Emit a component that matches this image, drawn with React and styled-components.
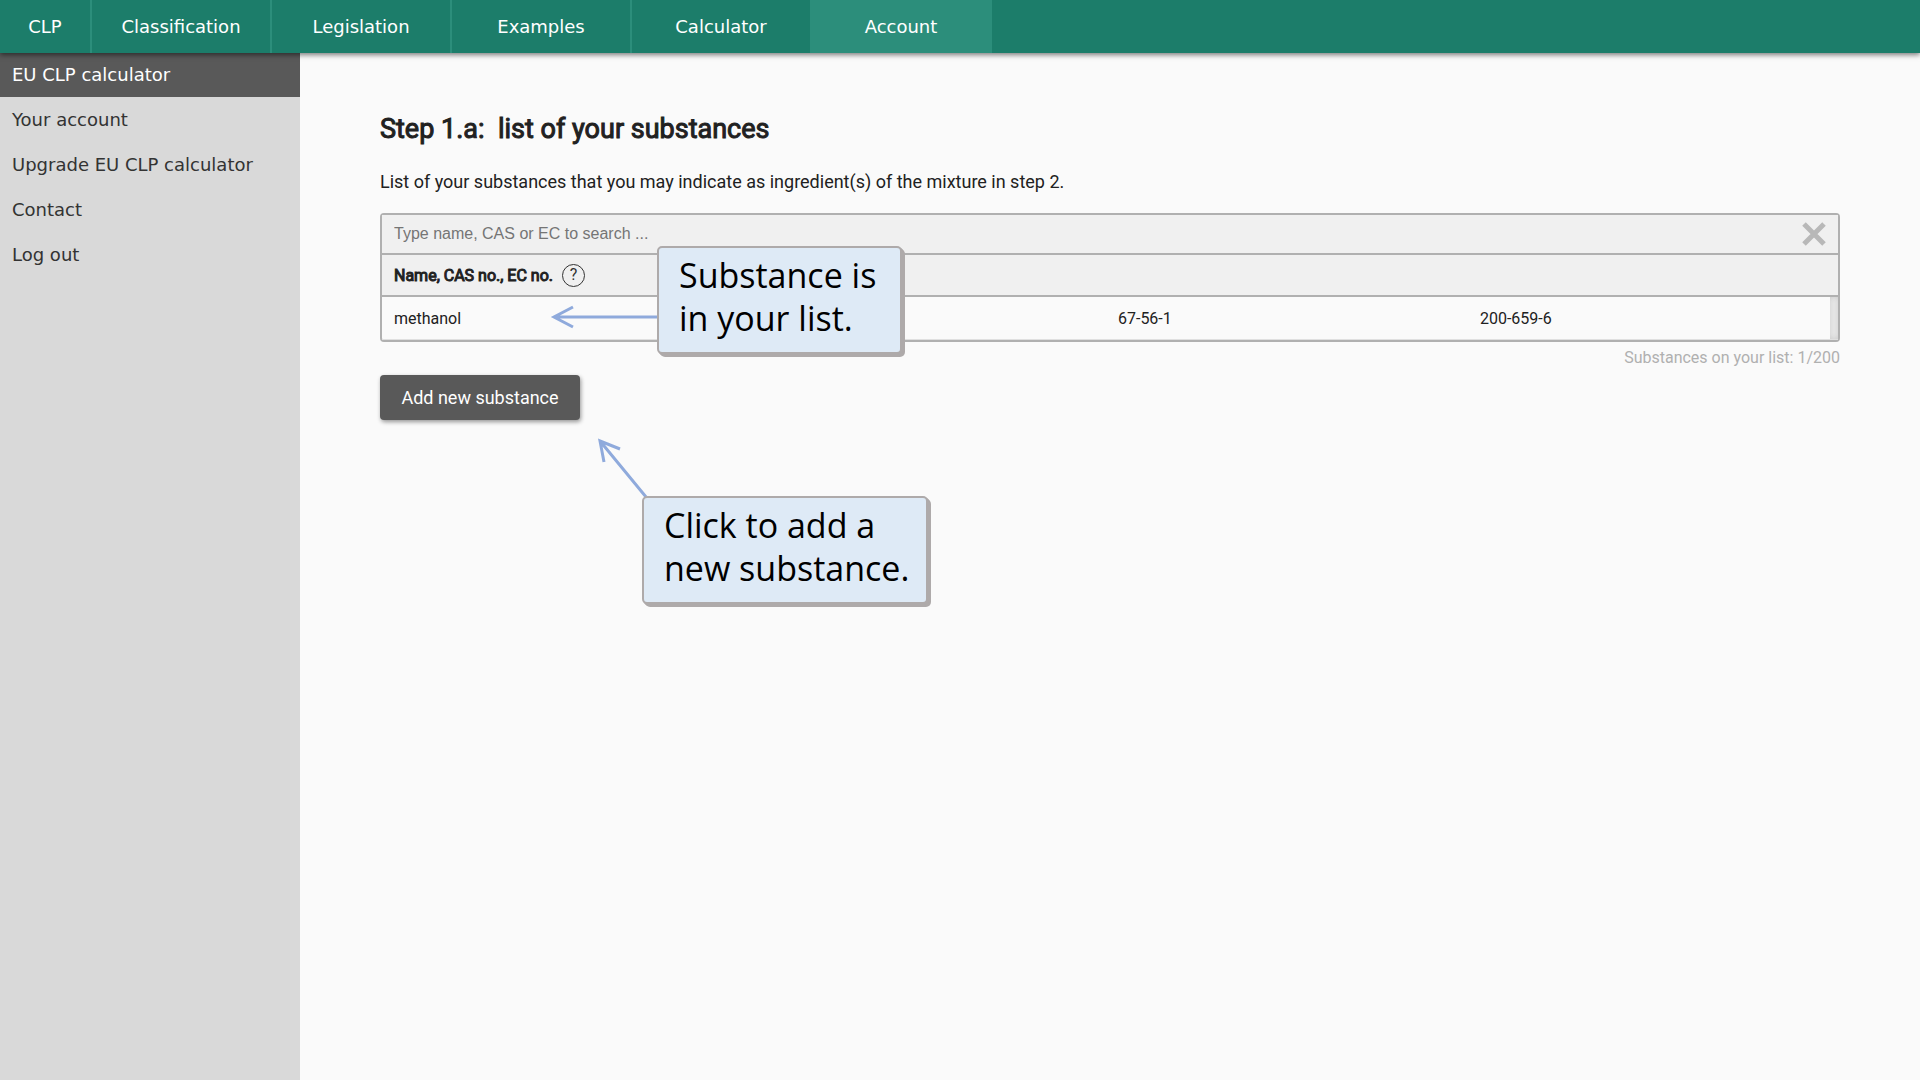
import React, { useState } from 'react';
import styled, { createGlobalStyle, ThemeProvider } from 'styled-components';

const theme = {
    color: {
        primary: '#1c7d6a',
        primaryLight: '#2c8e7b',
        dark: '#595959',
        sidebar: '#d9d9d9',
        background: '#fafafa',
        field: '#f0f0f0',
        line: '#b0b0b0',
        text: '#212121',
        note: '#deeaf6',
        noteLine: '#aeaaaa',
        arrow: '#8faadc',
    },
    font: {
        menu: '"DejaVu Sans", Verdana, sans-serif',
        body: 'Roboto, sans-serif',
        input: '"Liberation Sans", Arial, sans-serif',
        note: '"Open Sans", "Trebuchet MS", sans-serif',
    },
};

const TABS = ['CLP', 'Classification', 'Legislation', 'Examples', 'Calculator', 'Account'];
const MENU = ['EU CLP calculator', 'Your account', 'Upgrade EU CLP calculator', 'Contact', 'Log out'];
const SUBSTANCES = [
    { name: 'methanol', cas: '67-56-1', ec: '200-659-6' },
];
const MAX_SUBSTANCES = 200;

function SearchBar({ value, onChange }) {
    return (
        <StyledSearchBar>
            <input
                type="text"
                aria-label="Search substances"
                placeholder="Type name, CAS or EC to search ..."
                value={value}
                onChange={(e) => onChange(e.target.value)}
            />
            <button type="button" aria-label="Clear search" onClick={() => onChange('')}>
                <svg width="24" height="24" viewBox="0 0 24 24" fill="none" stroke="currentColor" strokeWidth="5">
                    <path d="M2 2L22 22M22 2L2 22" />
                </svg>
            </button>
        </StyledSearchBar>
    );
}

function SubstanceTable({ items }) {
    return (
        <StyledTable>
            <colgroup>
                <col />
                <col />
                <col />
                <col />
                <TrackCol />
            </colgroup>
            <thead>
                <tr>
                    <th colSpan={5} scope="colgroup">
                        <HeadLabel>
                            <span>Name, CAS no., EC no.</span>
                            <HelpButton type="button" aria-label="Help">?</HelpButton>
                        </HeadLabel>
                    </th>
                </tr>
            </thead>
            <tbody>
                {items.map(item => (
                    <tr key={item.cas}>
                        <td colSpan={2}>{item.name}</td>
                        <td>{item.cas}</td>
                        <td>{item.ec}</td>
                        <TrackCell />
                    </tr>
                ))}
            </tbody>
        </StyledTable>
    );
}

function App() {
    const [query, setQuery] = useState('');
    const items = SUBSTANCES.filter(x => Object.values(x).join(' ').includes(query.toLowerCase()));
    return (
        <ThemeProvider theme={theme}>
            <GlobalStyle />
            <Page>
                <TopNav>
                    {TABS.map((tab, i) => (
                        <Tab key={tab} href="#" $small={i === 0} $active={tab === 'Account'}>{tab}</Tab>
                    ))}
                </TopNav>
                <Body>
                    <Sidebar>
                        {MENU.map((item, i) => (
                            <SidebarLink key={item} href="#" $active={i === 0}>{item}</SidebarLink>
                        ))}
                    </Sidebar>
                    <Main>
                        <Title>Step 1.a:&nbsp; list of your substances</Title>
                        <Intro>List of your substances that you may indicate as ingredient(s) of the mixture in step 2.</Intro>
                        <Anchor>
                            <ListBox>
                                <SearchBar value={query} onChange={setQuery} />
                                <SubstanceTable items={items} />
                            </ListBox>
                            <ListArrow width="108" height="26" viewBox="0 0 108 26">
                                <path d="M108 13H4M23 3L4 13L23 23" />
                            </ListArrow>
                            <ListNote>Substance is<br />in your list.</ListNote>
                        </Anchor>
                        <Counter>Substances on your list: {SUBSTANCES.length}/{MAX_SUBSTANCES}</Counter>
                        <Anchor>
                            <AddButton type="button">Add new substance</AddButton>
                            <AddArrow width="52" height="62" viewBox="0 0 52 62">
                                <path d="M50 62L4 6M24 14L4 6L8 27" />
                            </AddArrow>
                            <AddNote>Click to add a<br />new substance.</AddNote>
                        </Anchor>
                    </Main>
                </Body>
            </Page>
        </ThemeProvider>
    );
}

export default App;

const GlobalStyle = createGlobalStyle`
    *{
        box-sizing:border-box;
    }
    body{
        margin:0;
        background-color:${props => props.theme.color.background};
        color:${props => props.theme.color.text};
        font-family:${props => props.theme.font.body};
    }
`;

const Page = styled.div`
    display:flex;
    flex-direction:column;
    min-height:100vh;
`;

const TopNav = styled.nav`
    position:relative;
    z-index:1;
    display:flex;
    height:53px;
    margin-bottom:-1px;
    background-color:${props => props.theme.color.primary};
    box-shadow:0 2px 5px rgba(0,0,0,.5);
`;

const Tab = styled.a`
    display:flex;
    align-items:center;
    justify-content:center;
    width:${props => props.$small ? '92px' : '180px'};
    border-right:2px solid ${props => props.theme.color.primaryLight};
    background-color:${props => props.$active ? props.theme.color.primaryLight : 'transparent'};
    color:#fff;
    font-family:${props => props.theme.font.menu};
    font-size:18px;
    text-decoration:none;
`;

const Body = styled.div`
    flex:1;
    display:flex;
`;

const Sidebar = styled.nav`
    flex:none;
    width:300px;
    background-color:${props => props.theme.color.sidebar};
`;

const SidebarLink = styled.a`
    display:block;
    padding:0 12px;
    line-height:45px;
    background-color:${props => props.$active ? props.theme.color.dark : 'transparent'};
    color:${props => props.$active ? '#fff' : '#333'};
    font-family:${props => props.theme.font.menu};
    font-size:18px;
    text-decoration:none;
`;

const Main = styled.main`
    flex:1;
    min-width:0;
    padding:60px 80px;
`;

const Title = styled.h1`
    margin:0 0 22px;
    font-size:27px;
    font-weight:400;
    line-height:34px;
    -webkit-text-stroke:1px;
`;

const Intro = styled.p`
    margin:0 0 17px;
    font-size:18px;
    line-height:28px;
`;

const Anchor = styled.div`
    position:relative;
`;

const ListBox = styled.div`
    border:2px solid ${props => props.theme.color.line};
    border-radius:4px;
`;

const StyledSearchBar = styled.div`
    display:flex;
    align-items:center;
    height:38px;
    padding:0 12px;
    background-color:${props => props.theme.color.field};
    input{
        flex:1;
        padding:0;
        border:0;
        outline:0;
        background-color:transparent;
        font-family:${props => props.theme.font.input};
        font-size:16px;
    }
    input::placeholder{
        color:#757575;
    }
    button{
        display:flex;
        padding:0;
        border:0;
        background-color:transparent;
        color:#b8b8b8;
        cursor:pointer;
    }
`;

const StyledTable = styled.table`
    width:100%;
    table-layout:fixed;
    border-collapse:separate;
    border-spacing:0;
    font-size:16px;
    th, td{
        padding:0 12px;
        text-align:left;
    }
    th{
        height:44px;
        border-top:2px solid ${props => props.theme.color.line};
        border-bottom:2px solid ${props => props.theme.color.line};
        background-color:${props => props.theme.color.field};
        font-weight:400;
    }
    td{
        height:43px;
        border-bottom:1px solid #e0e0e0;
    }
`;

const TrackCol = styled.col`
    width:8px;
`;

const TrackCell = styled.td`
    && {
        padding:0;
        background-color:#ececec;
        box-shadow:inset 0 0 6px rgba(0,0,0,.15);
    }
`;

const HeadLabel = styled.div`
    display:flex;
    align-items:center;
    gap:9px;
    span{
        -webkit-text-stroke:1px;
    }
`;

const HelpButton = styled.button`
    width:23px;
    height:23px;
    padding:0;
    border:1px solid #333;
    border-radius:50%;
    background-color:transparent;
    color:#333;
    font-family:inherit;
    font-size:16px;
    line-height:20px;
`;

const Counter = styled.p`
    margin:0;
    padding:4px 0 6px;
    color:${props => props.theme.color.line};
    font-size:16px;
    line-height:23px;
    text-align:right;
`;

const AddButton = styled.button`
    display:block;
    width:200px;
    height:45px;
    border:0;
    border-radius:4px;
    background-color:${props => props.theme.color.dark};
    box-shadow:1px 2px 4px rgba(0,0,0,.4);
    color:#fff;
    font-family:inherit;
    font-size:18px;
    cursor:pointer;
`;

const Note = styled.div`
    position:absolute;
    padding:6px 20px 12px;
    border:2px solid ${props => props.theme.color.noteLine};
    border-radius:5px;
    background-color:${props => props.theme.color.note};
    box-shadow:
        1px 1px 0 ${props => props.theme.color.noteLine},
        2px 2px 0 ${props => props.theme.color.noteLine},
        3px 3px 0 ${props => props.theme.color.noteLine};
    color:#000;
    font-family:${props => props.theme.font.note};
    font-size:34px;
    line-height:43px;
    white-space:nowrap;
`;

const ListNote = styled(Note)`
    top:33px;
    left:277px;
    width:245px;
`;

const AddNote = styled(Note)`
    top:121px;
    left:262px;
    width:286px;
`;

const Arrow = styled.svg`
    position:absolute;
    fill:none;
    stroke:${props => props.theme.color.arrow};
    stroke-width:3;
`;

const ListArrow = styled(Arrow)`
    top:91px;
    left:170px;
`;

const AddArrow = styled(Arrow)`
    top:60px;
    left:216px;
`;
